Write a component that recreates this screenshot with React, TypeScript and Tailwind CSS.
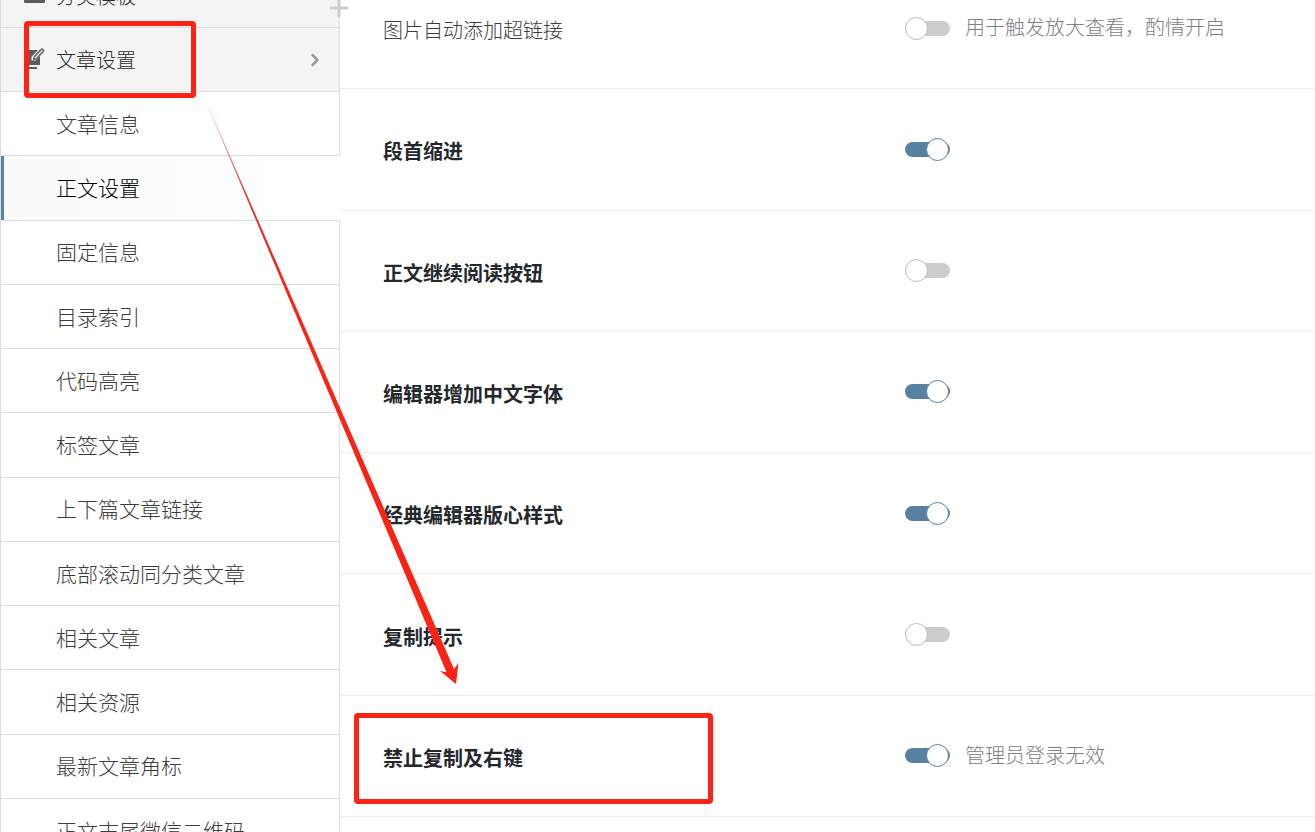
import { useState } from 'react';
import { ChevronRight } from 'lucide-react';

type Setting = {
  id: string;
  label: string;
  enabled: boolean;
  bold?: boolean;
  hint?: string;
};

const MENU_ITEMS = [
  '文章信息',
  '正文设置',
  '固定信息',
  '目录索引',
  '代码高亮',
  '标签文章',
  '上下篇文章链接',
  '底部滚动同分类文章',
  '相关文章',
  '相关资源',
  '最新文章角标',
  '正文末尾微信二维码',
];

const SETTINGS: Setting[] = [
  { id: 'image-link', label: '图片自动添加超链接', enabled: false, hint: '用于触发放大查看，酌情开启' },
  { id: 'indent', label: '段首缩进', enabled: true, bold: true },
  { id: 'read-more', label: '正文继续阅读按钮', enabled: false, bold: true },
  { id: 'editor-font', label: '编辑器增加中文字体', enabled: true, bold: true },
  { id: 'classic-editor', label: '经典编辑器版心样式', enabled: true, bold: true },
  { id: 'copy-tip', label: '复制提示', enabled: false, bold: true },
  { id: 'no-copy', label: '禁止复制及右键', enabled: true, bold: true, hint: '管理员登录无效' },
];

function TemplateIcon() {
  return (
    <svg className="w-[21px] h-[14px] shrink-0" viewBox="0 0 21 14" fill="#5c5c5c">
      <rect x="0" y="0" width="21" height="14" rx="1" />
    </svg>
  );
}

function EditIcon() {
  return (
    <svg className="w-[21px] h-6 shrink-0" viewBox="0 0 21 24">
      <path d="M0 2h14L7.5 8.8V12.6h4.2L16 8v9H0z" fill="#5c5c5c" />
      <path d="M0 19h13v2H0z" fill="#5c5c5c" />
      <path d="M9.6 11.6l.8-3L17 1.6q1-1 2 0t0 2l-6.6 7.2z" fill="#f4f4f4" stroke="#6a6a6a" strokeWidth="1.6" strokeLinejoin="round" />
    </svg>
  );
}

function Toggle({ id, checked, onChange }: { id: string; checked: boolean; onChange: () => void }) {
  return (
    <input
      id={id}
      type="checkbox"
      role="switch"
      checked={checked}
      onChange={onChange}
      className="relative block w-[45px] h-[15px] shrink-0 appearance-none rounded-full bg-[#cccccc] cursor-pointer before:content-[''] before:absolute before:-top-1 before:left-0 before:size-[23px] before:rounded-full before:border before:border-[#bbbbbb] before:bg-white checked:bg-[#5880a0] checked:before:left-[21px] checked:before:border-[#5880a0]"
    />
  );
}

export default function App() {
  const [active, setActive] = useState('正文设置');
  const [settings, setSettings] = useState(SETTINGS);

  const toggleSetting = (id: string) => {
    setSettings((prev) =>
      prev.map((s) => (s.id === id ? { ...s, enabled: !s.enabled } : s))
    );
  };

  return (
    <div className="relative flex h-screen overflow-hidden bg-white font-['Noto_Sans_CJK_SC',sans-serif] font-light">
      {/* 左侧菜单 */}
      <nav className="relative w-[340px] shrink-0">
        <div className="-mt-9">
          <a
            href="#template"
            className="flex h-16 items-center gap-[11px] border-x border-b border-[#dddddd] bg-[#f4f4f4] pl-[23px] text-[20px] text-[#2c2c2c]"
          >
            <TemplateIcon />
            分类模板
          </a>
          <a
            href="#article"
            className="flex h-16 items-center gap-[11px] border-x border-b border-[#dddddd] bg-[#f4f4f4] pl-[23px] pr-[14px] text-[20px] text-[#2c2c2c]"
          >
            <EditIcon />
            <span className="flex-1">文章设置</span>
            <ChevronRight className="size-5 text-[#999999]" strokeWidth={3} />
          </a>
          <ul className="grid min-h-[771px] auto-rows-fr">
            {MENU_ITEMS.map((item) => (
              <li key={item}>
                <a
                  href={`#${item}`}
                  onClick={() => setActive(item)}
                  className={`flex h-full items-center border-b border-l border-[#dddddd] text-[21px] ${
                    active === item
                      ? 'bg-linear-to-r from-[#fafafa] to-white text-black'
                      : 'border-r text-[#3c3c3c]'
                  }`}
                >
                  <span
                    className={`flex h-full items-center border-l-3 pl-[52px] ${
                      active === item ? 'border-[#5880a0]' : 'border-transparent'
                    }`}
                  >
                    {item}
                  </span>
                </a>
              </li>
            ))}
          </ul>
        </div>
        <svg className="absolute -top-px -right-2 size-[18px]" viewBox="0 0 18 18" stroke="#cccccc" strokeWidth="3">
          <path d="M9 0v18M0 9h18" />
        </svg>
      </nav>

      {/* 右侧设置项 */}
      <main className="min-w-0 flex-1">
        <div className="-mt-8 grid min-h-[849px] auto-rows-fr">
          {settings.map((s) => (
            <div key={s.id} className="flex items-center border-b border-[#eeeeee] pl-[43px]">
              <label
                htmlFor={s.id}
                className={`w-[522px] shrink-0 pt-1 text-[20px] ${
                  s.bold ? 'font-bold text-[#23282d]' : 'text-[#3c3c3c]'
                }`}
              >
                {s.label}
              </label>
              <Toggle id={s.id} checked={s.enabled} onChange={() => toggleSetting(s.id)} />
              {s.hint && <span className="pl-[15px] pb-0.5 text-[20px] text-[#808080]">{s.hint}</span>}
            </div>
          ))}
        </div>
      </main>

      {/* 标注 */}
      <div className="pointer-events-none absolute left-6 top-[21px] h-[77px] w-[172px] rounded border-5 border-[#fb2216]" />
      <div className="pointer-events-none absolute left-[354px] top-[713px] h-[91px] w-[359px] rounded border-5 border-[#fb2216]" />
      <svg className="pointer-events-none absolute left-[200px] top-[100px] h-[590px] w-[270px]" viewBox="200 100 270 590">
        <defs>
          <linearGradient id="arrow" gradientUnits="userSpaceOnUse" x1="209" y1="109" x2="291" y2="300">
            <stop offset="0" stopColor="#d83a30" stopOpacity="0.3" />
            <stop offset="0.5" stopColor="#d83a30" />
            <stop offset="1" stopColor="#fb2216" />
          </linearGradient>
        </defs>
        <path d="M209 109L209.5 109L454 669L458.5 663L456 684L440 671L446.5 672.3Z" fill="url(#arrow)" />
      </svg>
    </div>
  );
}
